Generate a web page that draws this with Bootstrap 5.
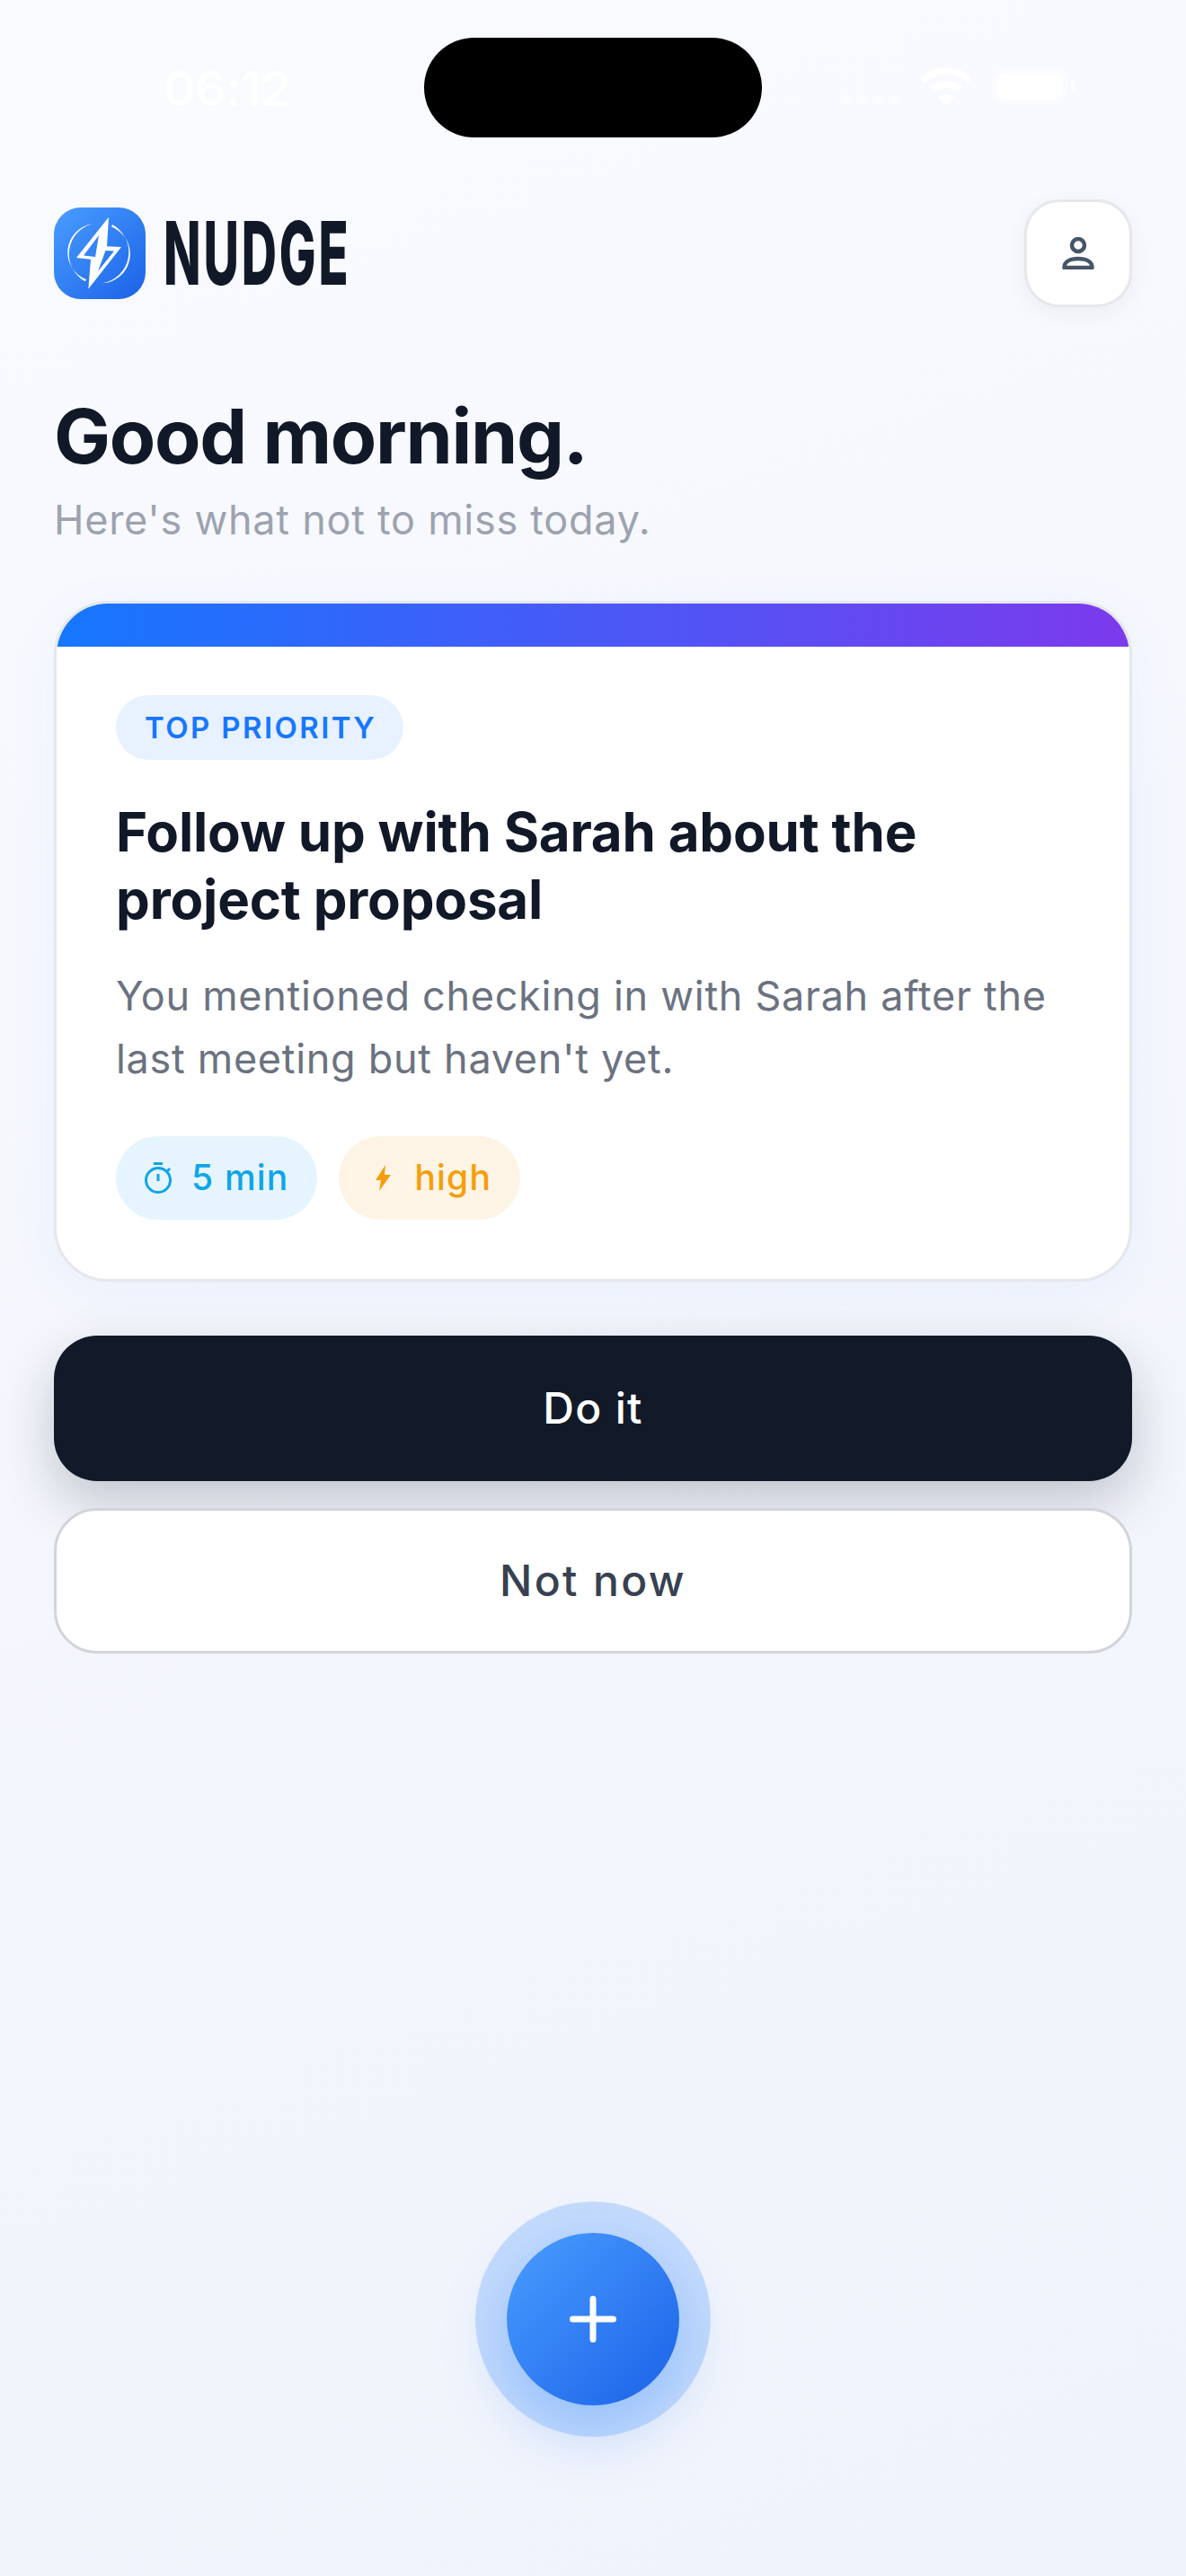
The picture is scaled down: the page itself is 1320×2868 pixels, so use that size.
<!DOCTYPE html>
<html lang="en">
<head>
<meta charset="utf-8">
<title>Nudge</title>
<link href="https://cdn.jsdelivr.net/npm/bootstrap@5.3.0/dist/css/bootstrap.min.css" rel="stylesheet">
<style>
html,body{height:100%}
body{font-family:Inter,"Liberation Sans",sans-serif;background:linear-gradient(160deg,#fafbff 0%,#f5f7fd 40%,#f0f3fb 100%);color:#111827;min-height:2868px;overflow:hidden}
.screen{height:2868px;padding:0 60px}
.status-row{height:110px;margin-top:42px;margin-bottom:70px}
.status-left{width:412px;padding:30px 0 0 122px}
.clock{font-size:54px;font-weight:600;color:rgba(255,255,255,.85);line-height:1;letter-spacing:-.5px}
.island{width:376px;height:111px;background:#000;border-radius:56px;flex:none}
.status-icons{gap:22px;padding-left:90px;padding-top:33px}
.sig{gap:8px;padding-top:31px}
.sig i{display:block;width:10px;height:9px;border-radius:50%;background:rgba(255,255,255,.6)}
.batt{width:84px;height:42px;border:6px solid rgba(255,255,255,.35);border-radius:14px;background:#fff;background-clip:padding-box;flex:none}
.batt-cap{width:5px;height:15px;background:rgba(255,255,255,.6);border-radius:0 4px 4px 0;margin-left:4px;flex:none}
.logo-mark{width:102px;height:102px;border-radius:30px;background:linear-gradient(135deg,#4a9dff,#1a62e8)}
.word{font-family:Inter,sans-serif;font-weight:800;font-size:97px;line-height:102px;color:#111827;letter-spacing:5px;transform-origin:left center;transform:scaleX(.56);margin-left:-4px;white-space:nowrap}
.user-btn{width:120px;height:120px;padding:0;border:3px solid #e5e7eb;border-radius:39px;background:#fff;box-shadow:0 6px 24px rgba(17,24,39,.05)}
.hello{font-size:84px;font-weight:700;line-height:1.2;margin:94px 0 0;letter-spacing:-1.3px}
.sub{font-size:45px;color:#9ca3af;line-height:1.3;margin:13px 0 61px;letter-spacing:.73px}
.task{border:3px solid #e5e7eb;border-radius:60px;overflow:hidden;background:#fff;box-shadow:0 12px 60px rgba(22,119,255,.05)}
.task-bar{height:48px;background:linear-gradient(90deg,#1677ff,#7c3aed)}
.task-body{padding:54px 66px 66px}
.tag{background:#e8f1ff;color:#1677ff;font-size:33px;font-weight:600;letter-spacing:2.4px;padding:0 30px 0 32px;height:72px;line-height:72px;border-radius:36px;display:inline-block}
.task-title{font-size:60px;font-weight:700;line-height:75px;margin:43px 0 35px;letter-spacing:-.18px;color:#111827}
.task-desc{font-size:45px;line-height:69.75px;color:#6b7280;margin:0 0 51px;letter-spacing:.7px}
.chip{height:93px;border-radius:47px;font-size:39px;font-weight:500;letter-spacing:1.2px;gap:22px;padding:0 32px}
.chip-blue{background:#e6f5fd;color:#0ea5e9}
.chip-amber{background:#fef4e6;color:#f59e0b}
.cta{height:162px;border-radius:48px;font-size:48px;width:100%}
.cta-dark{background:#121a29;color:#fff;font-weight:500;border:0;box-shadow:0 24px 60px rgba(17,24,39,.22);margin-top:60px;letter-spacing:1.3px}
.cta-light{background:#fff;color:#374151;font-weight:500;border:3px solid #d1d5db;margin-top:30px;letter-spacing:2.4px}
.fab-wrap{margin-top:645px}
.fab{width:192px;height:192px;padding:0;border:0;border-radius:50%;background:linear-gradient(135deg,#4a9dff,#1a62e8);box-shadow:0 0 0 35px rgba(22,119,255,.2),0 24px 72px rgba(22,119,255,.3)}
</style>
</head>
<body>
<div class="screen d-flex flex-column">
  <div class="status-row d-flex align-items-start">
    <div class="status-left"><div class="clock">06:12</div></div>
    <div class="island"></div>
    <div class="status-icons d-flex align-items-start">
      <div class="sig d-flex"><i></i><i></i><i></i><i></i></div>
      <svg width="58" height="42" viewBox="0 0 58 42" fill="#fff" fill-opacity=".9"><path d="M29 0c11 0 21 4 29 12l-5 6C47 12 38 8 29 8S11 12 5 18l-5-6C8 4 18 0 29 0z"/><path d="M29 15c7 0 13 2.500 18 7l-5 6c-3.500-3-8-5-13-5s-9.500 2-13 5l-5-6c5-4.500 11-7 18-7z"/><path d="M29 30c3.500 0 6.500 1 9 3l-9 9-9-9c2.500-2 5.500-3 9-3z"/></svg>
      <div class="d-flex align-items-center"><div class="batt"></div><div class="batt-cap"></div></div>
    </div>
  </div>

  <div class="d-flex justify-content-between align-items-center">
    <div class="d-flex align-items-center gap-4">
      <div class="logo-mark d-flex">
        <svg width="102" height="102" viewBox="0 0 102 102" fill="#fff">
          <path fill-rule="evenodd" d="M61 10.700 25 56 41 57.700 38.300 90.700 75 44 59 43.300ZM50 31 33 53.500 46 55ZM49 71 67 48.500 57.500 48Z"/>
          <path d="M43.300 18.300A34.500 34.500 0 0 0 35 82.300L36 80A32 32 0 0 1 43.300 18.300Z"/>
          <path d="M65 19A35 35 0 0 1 54 84.300A32.500 32.500 0 0 0 64 21.500Z"/>
        </svg>
      </div>
      <div class="word">NUDGE</div>
    </div>
    <button class="user-btn btn d-flex align-items-center justify-content-center" aria-label="Profile">
      <svg width="36" height="36" viewBox="0 0 36 36" fill="none" stroke="#475569" stroke-width="4.500"><ellipse cx="18" cy="9" rx="7" ry="7"/><path d="M2.500 34c0-7 7-10 15.500-10s15.500 3 15.500 10z" stroke-linejoin="round"/></svg>
    </button>
  </div>

  <h1 class="hello">Good morning.</h1>
  <p class="sub">Here's what not to miss today.</p>

  <div class="task card">
    <div class="task-bar"></div>
    <div class="task-body">
      <span class="tag">TOP PRIORITY</span>
      <h2 class="task-title">Follow up with Sarah about the project proposal</h2>
      <p class="task-desc">You mentioned checking in with Sarah after the last meeting but haven't yet.</p>
      <div class="d-flex gap-4">
        <div class="chip chip-blue d-flex align-items-center">
          <svg width="30" height="35" viewBox="0 0 30 35" fill="none" stroke="currentColor" stroke-width="3"><circle cx="15" cy="20" r="13.500"/><path d="M10 1.500h10M15 13v8M25 10l3-3"/></svg>
          <span>5 min</span>
        </div>
        <div class="chip chip-amber d-flex align-items-center">
          <svg width="30" height="29" viewBox="0 0 30 29" fill="currentColor"><path d="M20 0 9 17h6L13 29 26 11h-7z"/></svg>
          <span>high</span>
        </div>
      </div>
    </div>
  </div>

  <button class="btn cta cta-dark">Do it</button>
  <button class="btn cta cta-light">Not now</button>

  <div class="fab-wrap d-flex justify-content-center">
    <button class="btn fab d-flex align-items-center justify-content-center" aria-label="Add">
      <svg width="52" height="52" viewBox="0 0 52 52" stroke="#fff" stroke-width="7" stroke-linecap="round"><path d="M26 3.500v45M3.500 26h45"/></svg>
    </button>
  </div>
</div>
<script src="https://cdn.jsdelivr.net/npm/bootstrap@5.3.0/dist/js/bootstrap.bundle.min.js"></script>
</body>
</html>
